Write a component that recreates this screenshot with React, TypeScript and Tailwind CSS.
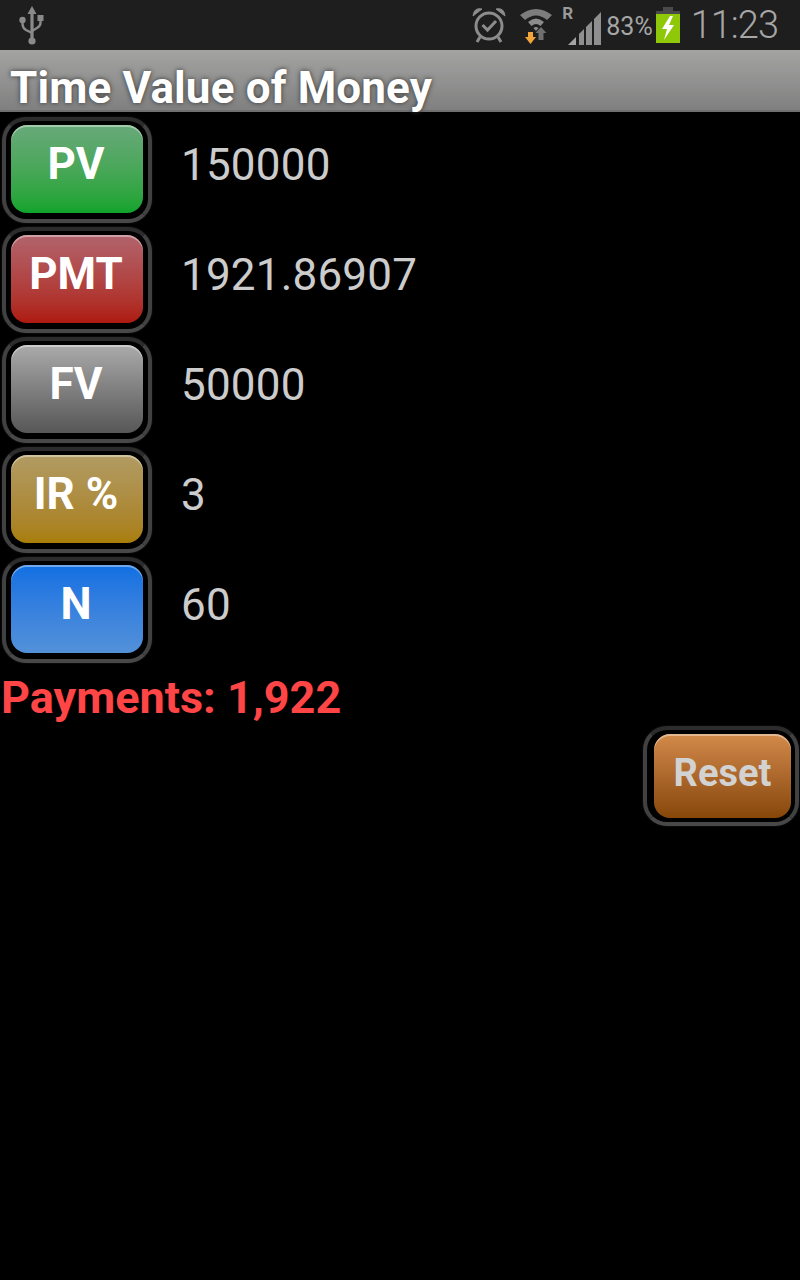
const rows = [
  { label: 'PV', value: '150000', face: 'bg-gradient-to-b from-[#68a97a] to-[#0ea42b]' },
  { label: 'PMT', value: '1921.86907', face: 'bg-gradient-to-b from-[#b1636c] to-[#ae190f]' },
  { label: 'FV', value: '50000', face: 'bg-gradient-to-b from-[#ababab] to-[#575757]' },
  { label: 'IR %', value: '3', face: 'bg-gradient-to-b from-[#b19b62] to-[#a97e07]' },
  { label: 'N', value: '60', face: 'bg-gradient-to-b from-[#0f6fe2] to-[#5391d9]' },
];

const UsbIcon = () => (
  <svg width="28" height="40" viewBox="0 0 28 40" fill="#8a8a8a">
    <path d="M14 1 L18.5 9 H15.6 V34 H12.4 V9 H9.5 Z" />
    <circle cx="14" cy="36" r="3.6" />
    <circle cx="4.5" cy="15" r="3.2" />
    <rect x="19.5" y="10" width="6" height="6" />
    <path d="M4.5 15 V19 Q4.5 23 8 25 L14 28 M22.5 14 V18 Q22.5 21 19 23 L14 26" fill="none" stroke="#8a8a8a" strokeWidth="2.4" />
  </svg>
);

const AlarmIcon = () => (
  <svg width="34" height="36" viewBox="0 0 34 36" fill="none" stroke="#8c8c8c">
    <circle cx="17" cy="19" r="13" strokeWidth="3" />
    <path d="M10.5 18 L15.5 23 L24 14" strokeWidth="3" />
    <path d="M1 9 Q2 0 10 2 Z M33 9 Q32 0 24 2 Z" fill="#8c8c8c" strokeWidth="1" />
    <path d="M8 30 L5 35 M26 30 L29 35" strokeWidth="3" />
  </svg>
);

const WifiIcon = () => (
  <svg width="34" height="37" viewBox="0 0 34 37" fill="none">
    <path d="M0 8 Q16 -4 32 8 L27 13 Q16 4 5 13 Z" fill="#7d7d7d" />
    <path d="M8 15 Q16 8 24 15 L20.5 19 Q16 15 11.5 19 Z" fill="#8c8c8c" />
    <path d="M13.5 21 Q16 19 18.5 21 L16 24 Z" fill="#8c8c8c" />
    <path d="M18.5 33 V26 H15.5 L21 20 L26.5 26 H23.5 V33 Z" fill="#6f6f6f" />
    <path d="M8 30 V25 H13 V30 H16 L10.5 37 L5 30 Z" fill="#f2a43a" />
  </svg>
);

const SignalIcon = () => (
  <svg width="34" height="34" viewBox="0 0 34 34" fill="#8f8f8f">
    <path d="M0 33 L8 25 V33 Z" fill="#a4a4a4" />
    <path d="M11 22 L16 17 V33 H11 Z" />
    <path d="M18 15 L24 9 V33 H18 Z" />
    <path d="M26 7 L33 0 V33 H26 Z" />
  </svg>
);

const BatteryIcon = () => (
  <svg width="24" height="36" viewBox="0 0 24 36">
    <rect x="7" y="0" width="10" height="4" fill="#4a4a4a" />
    <rect x="0" y="4" width="24" height="6" fill="#4a4a4a" />
    <rect x="0" y="7" width="24" height="29" fill="#8fc808" />
    <path d="M14 9 L6 22 H11 L8 33 L18 18 H13 L17 9 Z" fill="#ffffff" />
  </svg>
);

const GlossyButton = ({ label, face, text, ring }: { label: string; face: string; text: string; ring: string }) => (
  <div className={`${ring} shrink-0 rounded-[24px] border-4 border-x-[#414141] border-t-[#2c2c2c] border-b-[#484848] bg-black pt-[4px] shadow-[inset_0_0_3px_#000,0_0_2px_#222]`}>
    <div className={`${face} flex h-full items-center justify-center rounded-[16px] font-bold shadow-[inset_0_2px_0_rgba(255,255,255,0.4)] ${text}`}>
      {label}
    </div>
  </div>
);

export default function App() {
  return (
    <div className="flex h-[1280px] w-[800px] flex-col overflow-hidden bg-black font-['Roboto',sans-serif]">
      {/* Status bar */}
      <div className="flex h-[50px] shrink-0 items-center bg-[#1e1e1e] pl-[18px] pr-[22px]">
        <UsbIcon />
        <div className="ml-auto flex items-center">
          <AlarmIcon />
          <div className="ml-[14px]"><WifiIcon /></div>
          <div className="relative ml-[9px] mt-[8px] h-[34px] w-[38px]">
            <span className="absolute left-[-1px] top-[-9px] text-[17px] font-bold leading-[20px] text-[#9a9a9a]">R</span>
            <div className="absolute left-[5px] top-0"><SignalIcon /></div>
          </div>
          <span className="ml-[5px] mt-[3px] text-[25px] leading-[30px] text-[#a6a6a6]">83%</span>
          <div className="ml-[3px]"><BatteryIcon /></div>
          <span className="ml-[11px] text-[38px] font-light leading-[44px] tracking-[-1px] text-[#a6a6a6]">11:23</span>
        </div>
      </div>

      {/* Title */}
      <div className="flex h-[62px] shrink-0 items-center border-b-2 border-b-[#6f6f6f] bg-gradient-to-b from-[#a3a4a2] to-[#808080] pl-[10px] pt-[16px]">
        <span className="text-[44px] font-bold leading-[48px] tracking-[0.15px] text-white [text-shadow:0_0_5px_#333]">Time Value of Money</span>
      </div>

      {/* Inputs */}
      <div className="flex flex-col pt-[3px]">
        {rows.map(row => (
          <div key={row.label} className="flex h-[110px] items-center pl-[2px]">
            <GlossyButton label={row.label} face={row.face} text="pb-[10px] pr-[2px] text-[44px] text-white" ring="h-[106px] w-[150px] px-[5px] pb-[6px]" />
            <span className="mb-[10px] ml-[29px] text-[44px] leading-[52px] tracking-[0.2px] text-[#cccccc]">{row.value}</span>
          </div>
        ))}
      </div>

      <div className="mt-[7px] pl-[1px] text-[45px] font-bold leading-[52px] text-[#ff4545]">Payments: 1,922</div>

      <div className="mt-[2px] flex justify-end pr-[1px]">
        <GlossyButton
          label="Reset"
          face="bg-gradient-to-b from-[#d38a4a] to-[#874708]"
          text="pb-[6px] text-[38px] text-[#d2d2d2]"
          ring="h-[100px] w-[156px] pl-[7px] pr-[4px] pb-[4px]"
        />
      </div>
    </div>
  );
}
